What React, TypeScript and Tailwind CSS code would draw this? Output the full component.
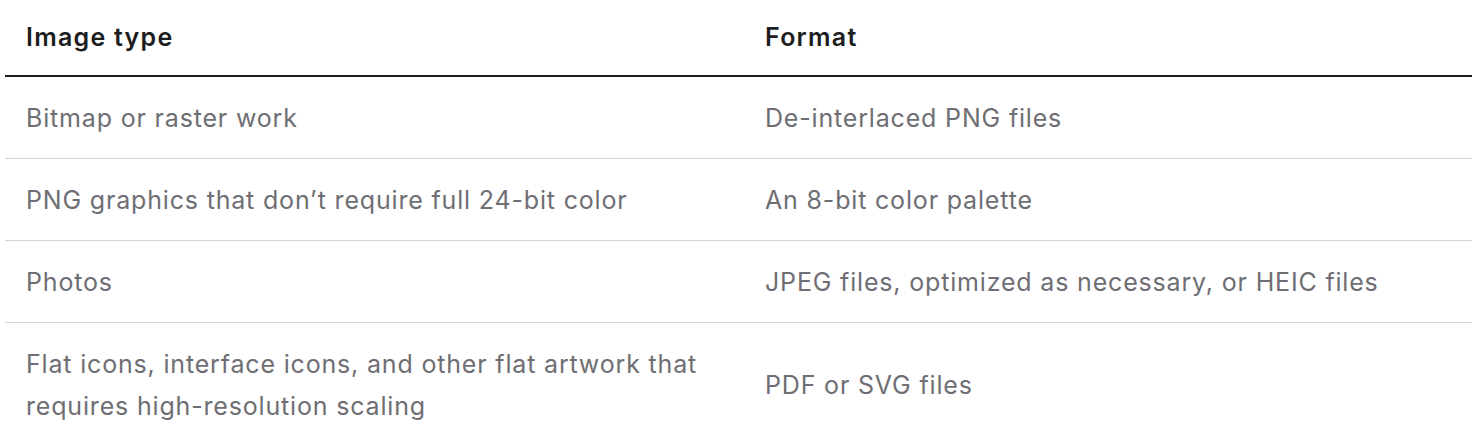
import React from "react";

const rows: [string, string][] = [
  ["Bitmap or raster work", "De-interlaced PNG files"],
  ["PNG graphics that don’t require full 24-bit color", "An 8-bit color palette"],
  ["Photos", "JPEG files, optimized as necessary, or HEIC files"],
  [
    "Flat icons, interface icons, and other flat artwork that requires high-resolution scaling",
    "PDF or SVG files",
  ],
];

export default function App() {
  return (
    <div
      className="bg-white w-[1472px] h-[434px] overflow-hidden pl-[5px]"
      style={{ fontFamily: "Inter, 'Noto Sans', sans-serif" }}
    >
      <div className="w-[1478px]">
        <div className="grid grid-cols-[739px_739px] border-b-2 border-[#1d1d1f] h-[77px] items-center">
          <div className="pl-[21px] text-[25px] font-semibold text-[#1d1d1f] tracking-[0.05em]">Image type</div>
          <div className="pl-[21px] text-[25px] font-semibold text-[#1d1d1f] tracking-[0.05em]">Format</div>
        </div>
        {rows.map(([a, b], i) => (
          <div
            key={i}
            className={`grid grid-cols-[739px_739px] items-center py-[19.5px] text-[25px] leading-[42px] text-[#6e6e73] tracking-[0.033em] ${
              i < rows.length - 1 ? "border-b border-[#d2d2d7]" : ""
            }`}
          >
            <div className="pl-[21px] pr-[30px]">{a}</div>
            <div className="pl-[21px]">{b}</div>
          </div>
        ))}
      </div>
    </div>
  );
}
